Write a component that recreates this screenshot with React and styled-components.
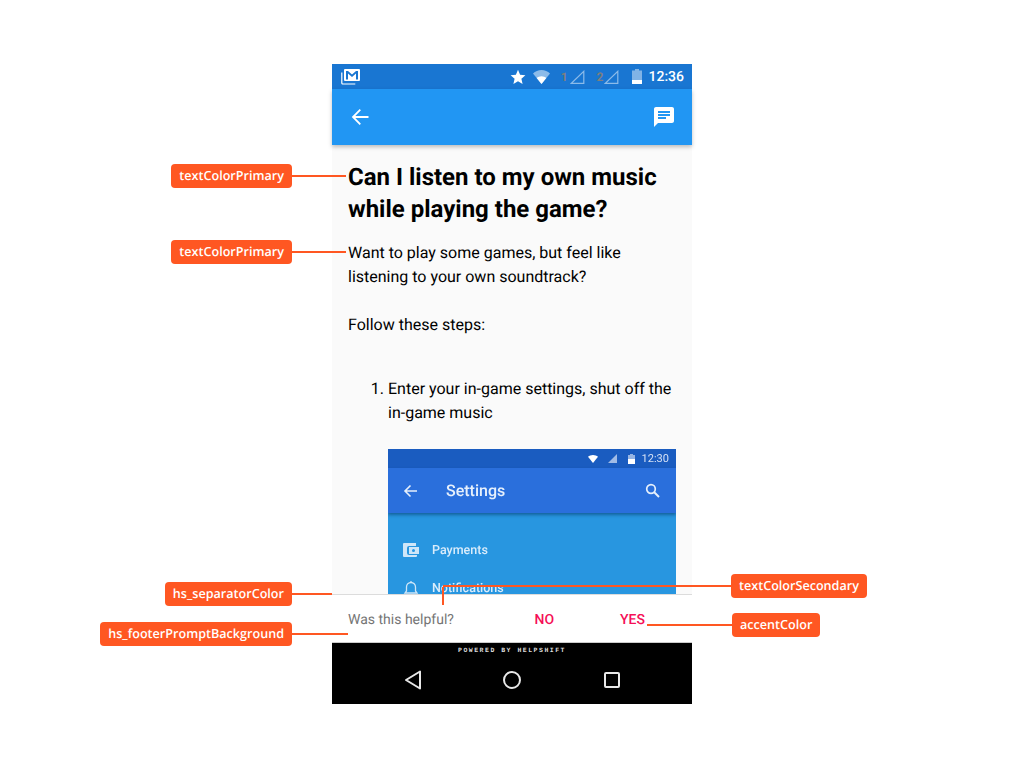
import styled, { createGlobalStyle } from "styled-components";

const Global = createGlobalStyle`
  html, body {
    margin: 0;
    padding: 0;
    background: #fff;
    font-family: Roboto, "Liberation Sans", sans-serif;
    text-rendering: geometricPrecision;
  }
`;

const Stage = styled.div`
  position: relative;
  width: 1024px;
  height: 768px;
  padding-top: 64px;
  box-sizing: border-box;
  display: flex;
  justify-content: center;
  overflow: hidden;
`;

const Phone = styled.div`
  width: 360px;
  height: 640px;
  display: flex;
  flex-direction: column;
  background: #fafafa;
`;

const StatusBar = styled.div`
  height: 25px;
  flex: none;
  background: #1976d2;
  display: flex;
  align-items: center;
  padding: 0 8px 0 9px;
  color: #fff;
`;

const StatusIcons = styled.div`
  margin-left: auto;
  display: flex;
  align-items: center;
`;

const SimNumber = styled.span`
  font-size: 12px;
  font-weight: 700;
  color: #7f7f7f;
  margin-right: ${(p) => p.$gap}px;
`;

const Clock = styled.span`
  font-size: 14px;
  font-weight: 500;
  margin-left: 6px;
  color: #fff;
`;

const Toolbar = styled.div`
  height: 56px;
  flex: none;
  background: #2196f3;
  display: flex;
  align-items: center;
  justify-content: space-between;
  padding: 0 16px;
  box-shadow: 0 2px 4px rgba(0, 0, 0, 0.25);
  position: relative;
  z-index: 1;
`;

const Article = styled.main`
  flex: 1;
  min-height: 0;
  overflow: hidden;
  padding: 16px 16px 0;
  color: #000;
  font-size: 16px;
  line-height: 24px;
`;

const Title = styled.h1`
  margin: 0 0 16px;
  font-size: 24px;
  line-height: 32px;
  font-weight: 700;
`;

const Para = styled.p`
  margin: 0 0 24px;
`;

const Steps = styled.ol`
  margin: 40px 0 0;
  padding: 0 0 0 40px;
`;

const ShotImage = styled.div`
  width: 288px;
  height: 146px;
  margin-top: 24px;
  overflow: hidden;
  background: #2896e0;
  filter: blur(0.5px);
  color: #d9ecfb;
`;

const ShotStatus = styled.div`
  height: 19px;
  background: #1a5cc0;
  display: flex;
  align-items: center;
  justify-content: flex-end;
  padding-right: 7px;
  font-size: 11px;
  line-height: 19px;
  color: #d6e2f5;
`;

const ShotClock = styled.span`
  margin-left: 7px;
`;

const ShotToolbar = styled.div`
  height: 45px;
  background: #2a6fdc;
  box-shadow: 0 2px 3px rgba(0, 50, 90, 0.5);
  display: flex;
  align-items: center;
  padding: 0 15px 0 15px;
  color: #e6f0fc;
`;

const ShotTitle = styled.span`
  font-size: 16px;
  font-weight: 500;
  margin-left: 28px;
  flex: 1;
`;

const ShotRows = styled.div`
  padding-top: 26px;
  display: flex;
  flex-direction: column;
  gap: 15px;
`;

const ShotRow = styled.div`
  height: 23px;
  display: flex;
  align-items: center;
  gap: 13px;
  padding-left: 15px;
  font-size: 12.5px;
  font-weight: 500;
`;

const Footer = styled.div`
  height: 48px;
  flex: none;
  box-sizing: border-box;
  border-top: 1px solid #dcdcdc;
  background: #fff;
  display: flex;
  align-items: center;
  padding: 2px 16px 0;
  font-size: 14px;
`;

const Prompt = styled.span`
  flex: 1;
  color: #757575;
`;

const Answer = styled.span`
  font-weight: 500;
  color: #f50f57;
  margin-right: ${(p) => p.$right}px;
`;

const NavArea = styled.div`
  height: 62px;
  flex: none;
  background: #000;
  border-top: 1px solid #ccc;
  box-sizing: border-box;
  display: flex;
  flex-direction: column;
  align-items: center;
`;

const Powered = styled.div`
  font-family: "Liberation Mono", monospace;
  font-size: 6.5px;
  font-weight: 700;
  line-height: 10px;
  letter-spacing: 1.5px;
  color: #ddd;
  margin-top: 3px;
`;

const NavButtons = styled.div`
  margin-top: 14px;
  width: 217px;
  display: flex;
  justify-content: space-between;
  align-items: center;
`;

const Callout = styled.div`
  position: absolute;
  top: ${(p) => p.$top}px;
  ${(p) => (p.$left ? `left: ${p.$left}px;` : "")}
  ${(p) => (p.$right ? `right: ${p.$right}px;` : "")}
  display: flex;
  align-items: center;
  z-index: 2;
`;

const Badge = styled.span`
  height: 24px;
  box-sizing: border-box;
  padding: 0 8px;
  border-radius: 4px;
  background: #ff5722;
  color: #fff;
  font-family: "Open Sans", sans-serif;
  font-size: 12.6px;
  font-weight: 600;
  line-height: 23px;
  white-space: nowrap;
`;

const Leader = styled.span`
  display: block;
  width: ${(p) => p.$width}px;
  height: 2px;
  background: #ff5722;
`;

const Drop = styled.span`
  position: absolute;
  left: 442px;
  top: 587px;
  width: 2px;
  height: 18px;
  background: #ff5722;
  z-index: 2;
`;

function StatusIconSet() {
  return (
    <StatusIcons>
      <svg width="16" height="16" viewBox="0 0 16 16" style={{ marginRight: 7 }}>
        <path fill="#fff" d="M8 .8l2.1 4.9 5.3.5-4 3.500 1.2 5.200L8 12.200l-4.600 2.700 1.200-5.200-4-3.500 5.300-.5z" />
      </svg>
      <svg width="17" height="14" viewBox="0 0 17 14" style={{ marginRight: 11 }}>
        <path fill="#fff" fillOpacity=".5" d="M8.500 14L0 3.400C2.300 1.300 5.200 0 8.500 0S14.700 1.300 17 3.400z" />
        <path fill="#fff" d="M8.500 14L3.700 8C5 6.900 6.700 6.200 8.500 6.200S12 6.900 13.300 8z" />
      </svg>
      <SimNumber $gap={2}>1</SimNumber>
      <svg width="15" height="14" viewBox="0 0 15 14" style={{ marginRight: 12 }}>
        <path fill="none" stroke="#fff" strokeOpacity=".5" strokeWidth="1.200" d="M13.800 1.300v12H1.300z" />
      </svg>
      <SimNumber $gap={1}>2</SimNumber>
      <svg width="15" height="14" viewBox="0 0 15 14" style={{ marginRight: 13 }}>
        <path fill="none" stroke="#fff" strokeOpacity=".5" strokeWidth="1.200" d="M13.800 1.300v12H1.300z" />
      </svg>
      <svg width="10" height="15" viewBox="0 0 10 15">
        <path fill="#fff" fillOpacity=".45" d="M3 0h4v1.500h3V12H0V1.500h3z" />
        <path fill="#fff" d="M0 11h10v4H0z" />
      </svg>
      <Clock>12:36</Clock>
    </StatusIcons>
  );
}

function ScreenshotImage() {
  return (
    <ShotImage>
      <ShotStatus>
        <svg width="10" height="8" viewBox="0 0 10 8" style={{ marginRight: 10 }}>
          <path fill="#fff" d="M5 8L0 1.800C1.300.7 3 0 5 0s3.700.7 5 1.800z" />
        </svg>
        <svg width="9" height="9" viewBox="0 0 9 9" style={{ marginRight: 11 }}>
          <path fill="#dbe6f6" fillOpacity=".7" d="M9 0v9H0z" />
        </svg>
        <svg width="7" height="10" viewBox="0 0 7 10">
          <path fill="#fff" fillOpacity=".55" d="M2 0h3v1h2v9H0V1h2z" />
          <path fill="#fff" d="M0 5h7v5H0z" />
        </svg>
        <ShotClock>12:30</ShotClock>
      </ShotStatus>
      <ShotToolbar>
        <svg width="15" height="14" viewBox="0 0 15 14">
          <path fill="none" stroke="currentColor" strokeWidth="1.600" d="M14 7H2M7.500 1.500L2 7l5.500 5.500" />
        </svg>
        <ShotTitle>Settings</ShotTitle>
        <svg width="16" height="15" viewBox="0 0 16 15">
          <circle cx="6" cy="6" r="4.300" fill="none" stroke="currentColor" strokeWidth="1.700" />
          <path stroke="currentColor" strokeWidth="2" d="M9 9l5 5" />
        </svg>
      </ShotToolbar>
      <ShotRows>
        <ShotRow>
          <svg width="16" height="15" viewBox="0 0 16 15">
            <path fill="#cfe6f8" fillRule="evenodd" d="M1 0h12v3H6a2 2 0 0 0-2 2v5a2 2 0 0 0 2 2h8v1a1 1 0 0 1-1 1H1a1 1 0 0 1-1-1V1a1 1 0 0 1 1-1zM6 4h10v7H6zM10.500 6a1.500 1.500 0 1 0 0 3 1.500 1.500 0 0 0 0-3z" />
          </svg>
          Payments
        </ShotRow>
        <ShotRow>
          <svg width="16" height="15" viewBox="0 0 16 15">
            <path fill="none" stroke="#cfe6f8" strokeWidth="1.300" d="M2 12h12l-1.500-2V6a4.500 4.500 0 0 0-9 0v4zM6.500 14h3M8 1V0" />
          </svg>
          Notifications
        </ShotRow>
      </ShotRows>
    </ShotImage>
  );
}

export default function App() {
  return (
    <Stage>
      <Global />
      <Phone>
        <StatusBar>
          <svg width="19" height="16" viewBox="0 0 19 16">
            <path fill="none" stroke="#fff" strokeWidth="1.200" d="M.8 3.500v10.500a1 1 0 0 0 1 1h12.500" />
            <path fill="#fff" fillRule="evenodd" d="M4 0h14a1 1 0 0 1 1 1v10a1 1 0 0 1-1 1H4a1 1 0 0 1-1-1V1a1 1 0 0 1 1-1zm1 2v8.500h2V4.500l4 3.500 4-3.500v6h2V2h-2l-4 3.500L7 2z" />
          </svg>
          <StatusIconSet />
        </StatusBar>
        <Toolbar>
          <svg width="24" height="24" viewBox="0 0 24 24">
            <path fill="none" stroke="#fff" strokeWidth="1.800" d="M20.500 12H5.500M12.300 4.700L5 12l7.300 7.300" />
          </svg>
          <svg width="24" height="24" viewBox="0 0 24 24">
            <path fill="#fff" d="M20 2H4c-1.100 0-1.990.9-1.990 2L2 22l4-4h14c1.100 0 2-.9 2-2V4c0-1.100-.9-2-2-2zM6 9h12v2H6V9zm8 5H6v-2h8v2zm4-6H6V6h12v2z" />
          </svg>
        </Toolbar>
        <Article>
          <Title>Can I listen to my own music while playing the game?</Title>
          <Para>
            Want to play some games, but feel like listening to your own soundtrack?
          </Para>
          <Para>Follow these steps:</Para>
          <Steps>
            <li>
              Enter your in-game settings, shut off the in-game music
              <ScreenshotImage />
            </li>
          </Steps>
        </Article>
        <Footer>
          <Prompt>Was this helpful?</Prompt>
          <Answer $right={66}>NO</Answer>
          <Answer $right={31}>YES</Answer>
        </Footer>
        <NavArea>
          <Powered>POWERED BY HELPSHIFT</Powered>
          <NavButtons>
            <svg width="18" height="20" viewBox="0 0 18 20">
              <path fill="none" stroke="#e8e8e8" strokeWidth="2" strokeLinejoin="round" d="M16 1.500v17L2 10z" />
            </svg>
            <svg width="20" height="20" viewBox="0 0 20 20">
              <circle cx="10" cy="10" r="8" fill="none" stroke="#e8e8e8" strokeWidth="2" />
            </svg>
            <svg width="18" height="18" viewBox="0 0 18 18">
              <rect x="2" y="2" width="14" height="14" rx="1" fill="none" stroke="#e8e8e8" strokeWidth="2" />
            </svg>
          </NavButtons>
        </NavArea>
      </Phone>

      <Callout $top={164} $right={678}>
        <Badge>textColorPrimary</Badge>
        <Leader $width={54} />
      </Callout>
      <Callout $top={240} $right={678}>
        <Badge>textColorPrimary</Badge>
        <Leader $width={54} />
      </Callout>
      <Callout $top={582} $right={692}>
        <Badge>hs_separatorColor</Badge>
        <Leader $width={40} />
      </Callout>
      <Callout $top={622} $right={676}>
        <Badge>hs_footerPromptBackground</Badge>
        <Leader $width={56} />
      </Callout>
      <Callout $top={574} $left={443}>
        <Leader $width={288} />
        <Badge>textColorSecondary</Badge>
      </Callout>
      <Drop />
      <Callout $top={613} $left={647}>
        <Leader $width={85} />
        <Badge>accentColor</Badge>
      </Callout>
    </Stage>
  );
}
